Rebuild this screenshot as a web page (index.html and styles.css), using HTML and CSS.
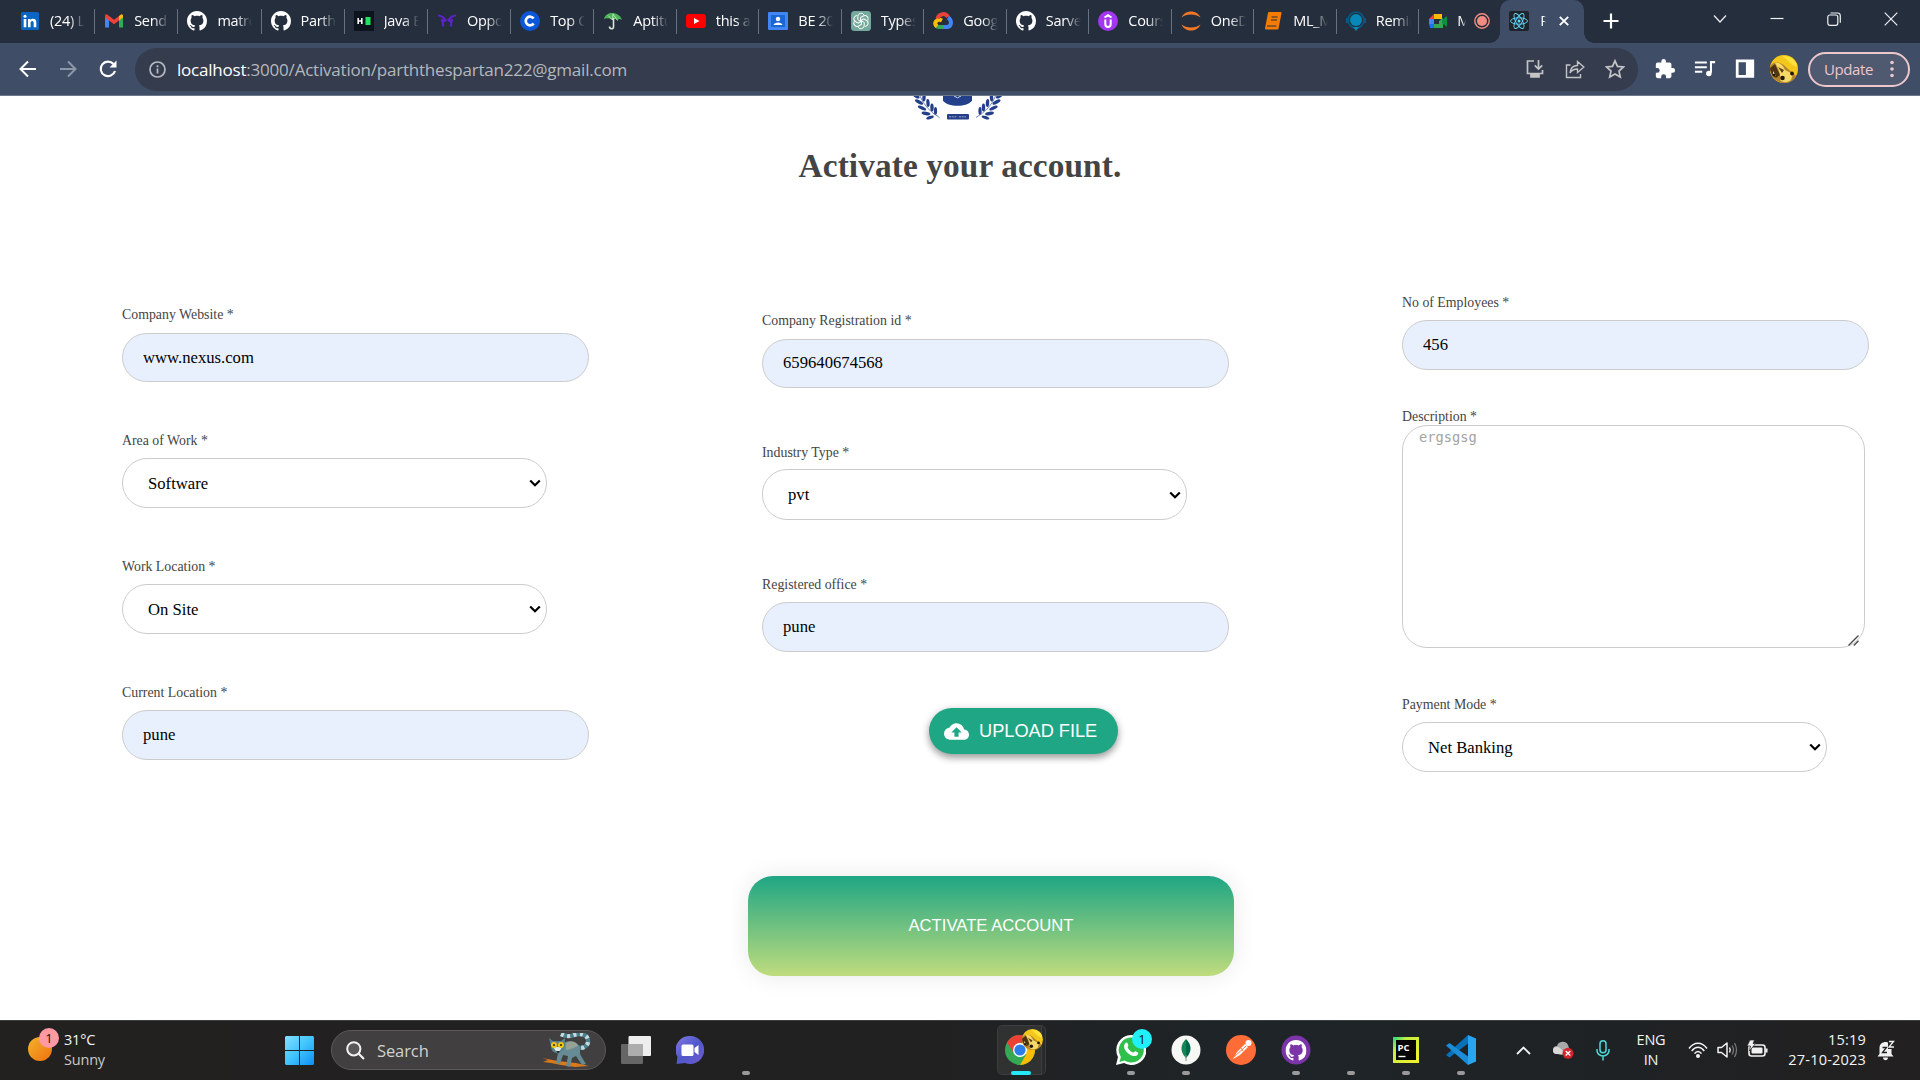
FILE: index.html
```html
<!DOCTYPE html>
<html lang="en">
<head>
<meta charset="utf-8">
<title>Activation</title>
<link rel="stylesheet" href="styles.css">
</head>
<body>
<svg class="defs" aria-hidden="true">
  <symbol id="github" viewBox="0 0 16 16"><path d="M8 0C3.58 0 0 3.58 0 8c0 3.54 2.29 6.53 5.47 7.59.4.07.55-.17.55-.38 0-.19-.01-.82-.01-1.49-2.01.37-2.53-.49-2.69-.94-.09-.23-.48-.94-.82-1.13-.28-.15-.68-.52-.01-.53.63-.01 1.08.58 1.23.82.72 1.21 1.87.87 2.33.66.07-.52.28-.87.51-1.07-1.78-.2-3.64-.89-3.64-3.95 0-.87.31-1.59.82-2.15-.08-.2-.36-1.02.08-2.12 0 0 .67-.21 2.2.82.64-.18 1.32-.27 2-.27s1.36.09 2 .27c1.53-1.04 2.2-.82 2.2-.82.44 1.1.16 1.92.08 2.12.51.56.82 1.27.82 2.15 0 3.07-1.87 3.75-3.65 3.95.29.25.54.73.54 1.48 0 1.07-.01 1.93-.01 2.2 0 .21.15.46.55.38A8.01 8.01 0 0 0 16 8c0-4.42-3.58-8-8-8z" fill="#fff"/></symbol>
  <symbol id="avatar" viewBox="0 0 28 28"><circle cx="14" cy="14" r="14" fill="#f3c81a"/><path d="M1 10C5 6 12 7 17 13l9 8c-2 4-6 7-11 7C7 28 0 22 0 14z" fill="#b5842a"/><path d="M0 13l5-4 5 11-4 3C2 20 0 17 0 13z" fill="#4e3413"/><path d="M5 8c5-1 8 2 10 7l8 4-2 6c-4 3-8 3-11 0 1-5-1-11-5-17z" fill="#f5d968"/><path d="M8 12l6 3-2 3z" fill="#5a3d16"/><path d="M3 16l3 5-3-1z" fill="#fff3c4"/><circle cx="12.500" cy="23" r="2.300" fill="#23150a"/><circle cx="22" cy="18.500" r="1.900" fill="#23150a"/><circle cx="4" cy="20" r="1.500" fill="#23150a"/><path d="M12 1c9-1 15 5 15 11-5-1-10-8-15-11z" fill="#ffe23c"/></symbol>
</svg>

<header class="browser">
  <div class="tabstrip">
    <div class="tab"><svg class="fav" viewBox="0 0 20 20"><rect x="1" y="1" width="18" height="18" rx="1.5" fill="#0a66c2"/><path d="M3.700 8h2.600v8.200H3.700zM8 8h2.500v1.200c.5-.9 1.400-1.400 2.600-1.400 2.500 0 3.200 1.600 3.200 3.900v4.500h-2.600v-4c0-1.200-.2-2.200-1.500-2.200s-1.600 1-1.600 2.200v4H8z" fill="#fff"/><circle cx="5" cy="5.200" r="1.500" fill="#fff"/></svg><span class="name">(24) Li</span></div>
    <div class="tab"><svg class="fav" viewBox="0 0 20 20"><path d="M1 5v11.500h4V8.500z" fill="#4285f4"/><path d="M19 5v11.500h-4V8.500z" fill="#34a853"/><path d="M15 5l2-1.500c1-.6 2 .2 2 1.500v1.500l-4 3z" fill="#fbbc04"/><path d="M1 5c0-1.500 1.200-2 2.200-1.400L10 8.700l5-3.700v4.500l-5 3.800-9-6.800z" fill="#ea4335"/></svg><span class="name">Send e</span></div>
    <div class="tab"><svg class="fav"><use href="#github"/></svg><span class="name">matrou</span></div>
    <div class="tab"><svg class="fav"><use href="#github"/></svg><span class="name">Parth3</span></div>
    <div class="tab"><svg class="fav" viewBox="0 0 20 20"><rect width="20" height="20" fill="#0e141e"/><path d="M4.200 7v6M7.800 7v6M4.200 10h3.600" stroke="#fff" stroke-width="1.600"/><rect x="11.500" y="6" width="5" height="8" fill="#1ee65c"/></svg><span class="name">Java E</span></div>
    <div class="tab"><svg class="fav" viewBox="0 0 20 20"><path d="M1 4.500c4 .3 6 2 7.500 4.500-1.500 2-3 0-4-.5 2 2.500 1 5 2 7M19 4.500c-4 .3-6 2-7.500 4.500 1.500 2 3 0 4-.5-2 2.500-1 5-2 7" fill="none" stroke="#5b23c9" stroke-width="2.200"/></svg><span class="name">Oppor</span></div>
    <div class="tab"><svg class="fav" viewBox="0 0 20 20"><circle cx="10" cy="10" r="10" fill="#0b57d8"/><path d="M13.600 7.600a4.300 4.300 0 1 0 0 4.800" fill="none" stroke="#fff" stroke-width="2.700"/></svg><span class="name">Top Co</span></div>
    <div class="tab late"><svg class="fav" viewBox="0 0 20 20"><path d="M1 8C3 0 16 0 19 9c-2-1.500-3.500-1-4.500.5C13 7.500 11 7.500 9.500 9 7 7 3 6.500 1 8z" fill="#4db457"/><path d="M10.500 7v9c0 2.500-4 2.500-4-.5" fill="none" stroke="#d9e6d9" stroke-width="1.600"/><path d="M5 4.500L9.500 9 10 3l4.500 6.500" stroke="#c8ecc6" fill="none" stroke-width=".8"/></svg><span class="name">Aptitu</span></div>
    <div class="tab late"><svg class="fav" viewBox="0 0 20 20"><rect y="3" width="20" height="14" rx="3" fill="#f00"/><path d="M8 7l5.500 3L8 13z" fill="#fff"/></svg><span class="name">this an</span></div>
    <div class="tab late"><svg class="fav" viewBox="0 0 20 20"><rect y="1" width="20" height="18" rx="1" fill="#4285f4"/><rect x="3" y="4" width="14" height="12" fill="#1967d2"/><circle cx="10" cy="8" r="2.200" fill="#fff"/><path d="M5.500 14c.5-3.500 8.500-3.500 9 0z" fill="#fff"/></svg><span class="name">BE 202</span></div>
    <div class="tab late"><svg class="fav" viewBox="0 0 20 20"><rect width="20" height="20" rx="3.500" fill="#75a99c"/><g fill="none" stroke="#fff" stroke-width="1"><path id="petal" d="M10 10.500L6.800 8.600V5.500a3.300 3.300 0 0 1 6.200-1.500"/><use href="#petal" transform="rotate(60 10 10)"/><use href="#petal" transform="rotate(120 10 10)"/><use href="#petal" transform="rotate(180 10 10)"/><use href="#petal" transform="rotate(240 10 10)"/><use href="#petal" transform="rotate(300 10 10)"/></g></svg><span class="name">Types</span></div>
    <div class="tab late"><svg class="fav" viewBox="0 0 20 20" fill="none" stroke-width="4"><path d="M10 16H6a4 4 0 0 1-3-1.500" stroke="#34a853"/><path d="M4 15.500C0 12 4 7 9 9.500" stroke="#fbbc04"/><path d="M4.500 7.500C6 2.500 12.500 1.500 15 6" stroke="#ea4335"/><path d="M10 16h4.500c4.500-1 4.500-7 .5-9.500" stroke="#4285f4"/></svg><span class="name">Googl</span></div>
    <div class="tab late"><svg class="fav"><use href="#github"/></svg><span class="name">Sarves</span></div>
    <div class="tab late"><svg class="fav" viewBox="0 0 20 20"><circle cx="10" cy="10" r="10" fill="#a435f0"/><path d="M6.500 6.500L10 4.300l3.500 2.200M7.300 8.500V13c0 4 5.400 4 5.400 0V8.500" fill="none" stroke="#fff" stroke-width="2"/></svg><span class="name">Cours</span></div>
    <div class="tab late"><svg class="fav" viewBox="0 0 20 20"><path d="M.5 6.500C4-1.500 16-1.500 19.500 6.500 15 2.500 5 2.500.5 6.500zM.5 13.500c3.500 8 15.500 8 19 0-4.500 4-14.500 4-19 0z" fill="#f37726"/></svg><span class="name">OneD</span></div>
    <div class="tab late"><svg class="fav" viewBox="0 0 20 20"><path d="M6 2h11.500l-3 15.500H3z" fill="#f57c00" stroke="#f57c00" stroke-width="2" stroke-linejoin="round"/><path d="M8.500 6h6M8 9h6M4 15h9.500" stroke="#253040" stroke-width="1.200"/></svg><span class="name">ML_M</span></div>
    <div class="tab late"><svg class="fav" viewBox="0 0 20 20"><circle cx="10" cy="9" r="8" fill="none" stroke="#075985" stroke-width="1.600"/><circle cx="10" cy="9" r="6" fill="#0788b8"/><path d="M7 16h6l-3 4z" fill="#0788b8"/><path d="M0 7h2v5H0zM18 7h2v5h-2z" fill="#075985"/></svg><span class="name">Remin</span></div>
    <div class="tab tab-call"><svg class="fav" viewBox="0 0 20 20"><path d="M1 8l5-5v5z" fill="#ea4335"/><path d="M6 3h8v5H6z" fill="#fbbc04"/><path d="M1 8h5v5H1z" fill="#4285f4"/><path d="M1 13h5v4H2z" fill="#1a73e8"/><path d="M6 13h5v-3l4-3v10H6z" fill="#34a853"/><path d="M14 9l5-4v11l-5-4z" fill="#0b8f43"/></svg><span class="name name-short">Me</span><svg class="rec" viewBox="0 0 16 16"><circle cx="8" cy="8" r="7.200" fill="none" stroke="#f28b82" stroke-width="1.400"/><circle cx="8" cy="8" r="5" fill="#f28b82"/></svg></div>
    <div class="tab active"><svg class="fav" viewBox="0 0 20 20"><rect width="20" height="20" rx="2" fill="#20232a"/><g fill="none" stroke="#61dafb" stroke-width=".9"><ellipse cx="10" cy="10" rx="8.500" ry="3.200"/><ellipse cx="10" cy="10" rx="8.500" ry="3.200" transform="rotate(60 10 10)"/><ellipse cx="10" cy="10" rx="8.500" ry="3.200" transform="rotate(120 10 10)"/></g><circle cx="10" cy="10" r="1.500" fill="#61dafb"/></svg><span class="name name-mini">R</span><svg class="x" viewBox="0 0 10 10"><path d="M.8.8l8.400 8.400M9.200.8L.8 9.200" stroke="#fff" stroke-width="1.900"/></svg></div>
    <svg class="plus" viewBox="0 0 16 16"><path d="M8 .5v15M.5 8h15" stroke="#fff" stroke-width="2.200"/></svg>
    <div class="window-controls">
      <svg viewBox="0 0 14 14"><path d="M1 3.500l6 6.500 6-6.500" /></svg>
      <svg viewBox="0 0 14 14"><path d="M.5 6.500h13" /></svg>
      <svg viewBox="0 0 14 14"><rect x=".8" y="3" width="10" height="10.300" rx="2"/><path d="M3.500 1h7q2.800 0 2.800 2.800v7"/></svg>
      <svg viewBox="0 0 14 14"><path d="M.7.7l12.600 12.600M13.300.7L.7 13.300"/></svg>
    </div>
  </div>
  <div class="toolbar">
    <svg class="nav" viewBox="0 0 20 20"><path d="M18 10H3M10 2.500L2.500 10l7.500 7.500" fill="none" stroke="#fff" stroke-width="2"/></svg>
    <svg class="nav" viewBox="0 0 20 20"><path d="M2 10h15M10 2.500l7.500 7.500-7.500 7.500" fill="none" stroke="#8d97a8" stroke-width="2"/></svg>
    <svg class="nav" viewBox="0 0 20 20"><path d="M17 12a7.300 7.300 0 1 1-1.500-7" fill="none" stroke="#fff" stroke-width="2.200"/><path d="M18.500 1.500v7h-7z" fill="#fff"/></svg>
    <div class="omnibox">
      <svg class="info" viewBox="0 0 17 17"><circle cx="8.500" cy="8.500" r="7.500" fill="none" stroke="#b5bac3" stroke-width="1.700"/><path d="M8.500 7.500v5M8.500 4.300v1.900" stroke="#b5bac3" stroke-width="1.800"/></svg>
      <span class="url"><b>localhost</b>:3000/Activation/parththespartan222@gmail.com</span>
      <svg class="act" viewBox="0 0 20 20"><path d="M9 2H2.500v12.500h15V11M13.500 1v8.500M9.800 6.300l3.700 3.700 3.700-3.700" /><path d="M6 15h8v3H6z" fill="#c4c4c6"/></svg>
      <svg class="act thin" viewBox="0 0 20 20"><path d="M5.500 6H1.500v12.500h14V15M5 14c.5-5 3-7.500 7.500-7.500V2.500L18.800 8l-6.300 5.500v-3.500C9 10 6.800 11 5 14z"/></svg>
      <svg class="act" viewBox="0 0 20 20"><path d="M10 1.800l2.500 5.600 6 .6-4.500 4.100 1.300 6L10 15l-5.300 3.100 1.300-6L1.500 8l6-.6z"/></svg>
    </div>
    <div class="extras">
      <svg viewBox="0 0 24 24"><path d="M20.500 11H19V7a2 2 0 0 0-2-2h-4V3.500a2.500 2.500 0 0 0-5 0V5H4a2 2 0 0 0-2 2v3.800h1.500a2.700 2.700 0 0 1 0 5.400H2V20a2 2 0 0 0 2 2h3.800v-1.500a2.700 2.700 0 0 1 5.400 0V22H17a2 2 0 0 0 2-2v-4h1.500a2.500 2.500 0 0 0 0-5z" fill="#fff"/></svg>
      <svg viewBox="0 0 24 24"><path d="M1 5h13M1 10h13M1 15h8" stroke="#fff" stroke-width="2.200"/><path d="M18.500 16V4.500H23" fill="none" stroke="#fff" stroke-width="2.200"/><circle cx="16.200" cy="17" r="3" fill="#fff"/></svg>
      <svg viewBox="0 0 24 24"><path d="M2 1.500h20v20H2zM5 4.500v14h8v-14z" fill="#fff" fill-rule="evenodd"/></svg>
      <svg class="profile"><use href="#avatar"/></svg>
    </div>
    <div class="update"><span>Update</span><svg viewBox="0 0 4 18"><g fill="#ecc8cc"><circle cx="2" cy="2.500" r="1.800"/><circle cx="2" cy="9" r="1.800"/><circle cx="2" cy="15.500" r="1.800"/></g></svg></div>
  </div>
</header>

<main class="page">
  <svg class="crest" viewBox="0 0 90 25">
    <g fill="#24408a">
      <path d="M30 0h29v4.500c-4 7-25 7-29 0z"/>
      <g id="laurel"><ellipse cx="3" cy="0" rx="4" ry="1.600" transform="rotate(30 3 0)"/><ellipse cx="6" cy="6" rx="4.500" ry="1.700" transform="rotate(30 6 6)"/><ellipse cx="9" cy="12" rx="4.500" ry="1.700" transform="rotate(25 9 12)"/><ellipse cx="13" cy="17.500" rx="4.500" ry="1.700" transform="rotate(10 13 17.500)"/><ellipse cx="17" cy="21.500" rx="4" ry="1.500" transform="rotate(-20 17 21.500)"/><ellipse cx="11" cy="1.500" rx="1.700" ry="4" transform="rotate(5 11 1.500)"/><ellipse cx="15" cy="7" rx="1.700" ry="4" transform="rotate(-5 15 7)"/><ellipse cx="19" cy="11.500" rx="1.700" ry="4"/><ellipse cx="22.500" cy="15" rx="1.600" ry="4"/></g>
      <use href="#laurel" transform="translate(89.500 0) scale(-1 1)"/>
      <rect x="34" y="18" width="22" height="5.500" rx="1"/>
    </g>
    <path d="M7 0Q12 13 26.500 21.500M82.500 0Q77.500 13 63 21.500" fill="none" stroke="#4c639f" stroke-width=".8"/>
    <path d="M41 0l3.500 1.800L48 0" fill="none" stroke="#cfd6e8"/>
    <path d="M36 20.800h8M46 20.800h7" stroke="#7283b3" stroke-width="1.500" stroke-dasharray="2 .7"/>
  </svg>
  <h1>Activate your account.</h1>
  <form>
    <div class="columns">
      <div class="col col-a">
        <div class="field"><label>Company Website *</label><input class="low" value="www.nexus.com"></div>
        <div class="field"><label>Area of Work *</label><select><option>Software</option></select></div>
        <div class="field"><label>Work Location *</label><select><option>On Site</option></select></div>
        <div class="field"><label>Current Location *</label><input value="pune"></div>
      </div>
      <div class="col col-b">
        <div class="field"><label>Company Registration id *</label><input class="low digits" value="659640674568"></div>
        <div class="field industry"><label>Industry Type *</label><select><option>pvt</option></select></div>
        <div class="field"><label>Registered office *</label><input value="pune"></div>
        <button type="button" class="upload"><svg viewBox="0 0 24 16"><path d="M19.350 6.040A7.490 7.490 0 0 0 12 0C9.110 0 6.600 1.640 5.350 4.040A5.994 5.994 0 0 0 0 10c0 3.310 2.690 6 6 6h13c2.760 0 5-2.240 5-5 0-2.640-2.050-4.780-4.650-4.960zM14 9v4h-4V9H7l5-5 5 5h-3z" fill="#fff"/></svg>UPLOAD FILE</button>
      </div>
      <div class="col col-c">
        <div class="field"><label>No of Employees *</label><input value="456"></div>
        <div class="field desc"><label>Description *</label><textarea placeholder="ergsgsg"></textarea><svg class="grip" viewBox="0 0 11 11"><path d="M.5 10.500l10-10M5.800 10.500l4.700-4.700" stroke="#4a4a4a" stroke-width="1.400"/></svg></div>
        <div class="field"><label>Payment Mode *</label><select><option>Net Banking</option></select></div>
      </div>
    </div>
    <button type="button" class="submit">ACTIVATE ACCOUNT</button>
  </form>
</main>

<footer class="taskbar">
  <div class="weather">
    <div class="sun"><span class="badge pink">1</span></div>
    <div class="two"><span>31°C</span><span class="dim">Sunny</span></div>
  </div>
  <svg class="start" viewBox="0 0 29 29"><defs><linearGradient id="w" x2="1" y2="1"><stop stop-color="#84e0ff"/><stop offset=".5" stop-color="#40c3fb"/><stop offset="1" stop-color="#0d8ff5"/></linearGradient></defs><path d="M1 0h13v14H0V1zM15 0h13l1 1v13H15zM0 15h14v14H1l-1-1zM15 15h14v13l-1 1H15z" fill="url(#w)"/></svg>
  <div class="search">
    <svg class="glass" viewBox="0 0 19 19"><circle cx="7.800" cy="7.800" r="6.600" fill="#5a5858" stroke="#f2f2f2" stroke-width="2"/><path d="M12.500 12.500l5.500 5.500" stroke="#f2f2f2" stroke-width="2.200"/></svg>
    <span>Search</span>
    <svg class="lemur" viewBox="0 0 50 34"><path d="M34 13c8 5 14-1 13-6-1-6-8-7-14-5-5 2-9 1-13-1" fill="none" stroke="#4a7f8d" stroke-width="4.200"/><path d="M34 13c8 5 14-1 13-6-1-6-8-7-14-5-5 2-9 1-13-1" fill="none" stroke="#c6d9dd" stroke-width="4.200" stroke-dasharray="3 3.500"/><path d="M1 25l16 3 18 2 13 3-14 1-14-2-10-2-8-1 5-2z" fill="#d9791b"/><path d="M17 15c4-7 16-10 21-2 2 4 0 7 2 10l5 8-4 1-6-9-4 2-2 9-4-1 2-10-5-1-3 9-4-1 2-10z" fill="#668b94"/><path d="M25 10c6-3 11-1 12 3-3 1-8 4-12 4z" fill="#96a294"/><path d="M8 5l4 3h8l4-3v7c0 4-4 8-8 8s-6-3-6-7z" fill="#55808d"/><path d="M12 14h9l-4 7z" fill="#e3e8df"/><circle cx="13" cy="12" r="3" fill="#f1c40f"/><circle cx="20" cy="12" r="3" fill="#f1c40f"/><circle cx="13" cy="12" r="1" fill="#222"/><circle cx="20" cy="12" r="1" fill="#222"/><path d="M15 18h4l-2 3z" fill="#1e3036"/></svg>
  </div>
  <svg class="taskview" viewBox="0 0 30 28"><rect y="8" width="22" height="20" rx="1" fill="#666"/><rect x="7.500" width="22.500" height="20" rx="1" fill="#eee"/><path d="M7.500 8H22v12H7.500z" fill="#adadad"/></svg>
  <svg class="chat" viewBox="0 0 28 28"><defs><linearGradient id="t" x2="1" y2="1"><stop stop-color="#8479e8"/><stop offset=".5" stop-color="#5058c9"/><stop offset="1" stop-color="#6f5bd1"/></linearGradient></defs><path d="M14 0a14 14 0 1 1-5 27l-8.500 1 1-7A14 14 0 0 1 14 0z" fill="url(#t)"/><rect x="5.500" y="8.500" width="12" height="11.500" rx="1.500" fill="#fff"/><path d="M18.500 12l4-3v10l-4-3z" fill="#fff"/></svg>
  <div class="app blank"><i></i></div>
  <div class="app chrome">
    <svg viewBox="0 0 30 30"><circle cx="15" cy="15" r="15" fill="#34a853"/><path d="M15 15V8h13.300A15 15 0 0 1 15 30l6.500-11z" fill="#fbbc04"/><path d="M2 7.500A15 15 0 0 1 28 7.500H15L9 18.500z" fill="#ea4335"/><circle cx="15" cy="15" r="7" fill="#fff"/><circle cx="15" cy="15" r="5.600" fill="#2b7de9"/></svg>
    <svg class="mini-avatar"><use href="#avatar"/></svg><i></i>
  </div>
  <div class="apps">
    <div class="app"><svg viewBox="0 0 30 30"><path d="M15 0a15 15 0 1 1-7 28L0 30l2-8A15 15 0 0 1 15 0z" fill="#fff"/><path d="M15 2.500a12.500 12.500 0 1 1-6.500 23L3.500 27l1.400-5A12.500 12.500 0 0 1 15 2.500z" fill="#2fc04c"/><path d="M9 8.500c1.500-1.800 2.500-1 3.300 1.500.4 1-1 1.800-.6 2.500 1.200 2.400 2.900 4 5.300 5 .8.200 1.500-1.500 2.300-1.200 3 1.300 3.500 1.700 2.500 3.200-1.400 2-4 2-6.800.7-3.500-1.700-5.500-4-6.700-7-.5-1.600-.2-3.500.7-4.700z" fill="#fff"/></svg><span class="badge cyan">1</span><i></i></div>
    <div class="app"><svg viewBox="0 0 30 30"><circle cx="15" cy="15" r="14.500" fill="#f7f7f5"/><path d="M15 4c5 5 7 12 0 19z" fill="#00684a"/><path d="M15 4c-5 5-7 12 0 19z" fill="#168457"/><path d="M15 20v6" stroke="#7b9488"/></svg><i></i></div>
    <div class="app"><svg viewBox="0 0 30 30"><circle cx="15" cy="15" r="15" fill="#ff6c37"/><path d="M7 24l4-7 8-8 3 3-8 8z" fill="#fff"/><circle cx="22.500" cy="8" r="3" fill="#fff"/><path d="M8 22l12-11M15 13l2 3" stroke="#ff6c37" stroke-width=".9"/></svg></div>
    <div class="app"><svg viewBox="0 0 30 30"><circle cx="15" cy="15" r="14.500" fill="#7c35a8"/><use href="#github" x="4.500" y="5" width="21" height="21"/></svg><i></i></div>
    <div class="app"><i></i></div>
    <div class="app"><svg viewBox="0 0 30 30"><defs><linearGradient id="p" x2="1" y2="1"><stop stop-color="#21d789"/><stop offset=".3" stop-color="#c8f03c"/><stop offset="1" stop-color="#f5ef2b"/></linearGradient></defs><rect x="2" y="2" width="26" height="26" fill="url(#p)"/><rect x="5" y="5" width="20" height="20" fill="#050505"/><text x="6.500" y="15.500" class="pc" fill="#fff">PC</text><path d="M7.500 21.500h7" stroke="#fff" stroke-width="1.400"/></svg><i></i></div>
    <div class="app"><svg viewBox="0 0 30 30"><path d="M22 0v8.500L3.500 22.500 0 20z" fill="#0871b8"/><path d="M0 10.500L3.500 8 22 21.500V30z" fill="#1c8cd8"/><path d="M22 0l8 3.500v23L22 30z" fill="#29a4f0"/></svg><i></i></div>
  </div>
  <div class="tray">
    <svg class="up" viewBox="0 0 15 9"><path d="M1 8l6.500-6.500L14 8" fill="none" stroke="#f2f2f2" stroke-width="1.800"/></svg>
    <svg class="cloud" viewBox="0 0 21 18"><path d="M4 13a4 4 0 0 1 0-8 6 6 0 0 1 11-1l2 6-8 4z" fill="#a9a9a9"/><path d="M3 13a3.500 3.500 0 0 1 1-7c3 0 5 2 7 7z" fill="#d9d9d9"/><circle cx="15" cy="12.300" r="5.500" fill="#d5232e"/><path d="M12.700 10l4.600 4.600M17.300 10l-4.600 4.600" stroke="#fff" stroke-width="1.400"/></svg>
    <svg class="mic" viewBox="0 0 14 21"><g fill="none" stroke="#4fd8d8" stroke-width="1.500"><rect x="4" y=".8" width="6" height="12" rx="3"/><path d="M1 9v1.500a6 5.500 0 0 0 12 0V9M7 16v4.500"/></g></svg>
    <div class="two lang"><span>ENG</span><span>IN</span></div>
    <svg class="wifi" viewBox="0 0 20 16"><g fill="none" stroke="#f2f2f2" stroke-width="1.500"><path d="M1 6.500C6-.5 14-.5 19 6.500M3.700 9C7.500 4 12.500 4 16.300 9M6.500 11.700c2-3 5-3 7 0"/></g><circle cx="10" cy="14" r="2" fill="#f2f2f2"/></svg>
    <svg class="vol" viewBox="0 0 21 16"><path d="M1 5.500h3.500L10 1v14l-5.500-4.500H1z" fill="none" stroke="#f2f2f2" stroke-width="1.500" stroke-linejoin="round"/><path d="M12.500 5.500q1.500 2.500 0 5" fill="none" stroke="#f2f2f2" stroke-width="1.400"/><path d="M15 3.500q3 4.500 0 9M17.500 1q4 7 0 14" fill="none" stroke="#777" stroke-width="1.300"/></svg>
    <svg class="bat" viewBox="0 0 21 17"><rect x="2" y="5" width="16" height="11" rx="2.500" fill="none" stroke="#f2f2f2" stroke-width="1.600"/><rect x="4.500" y="7.500" width="11" height="6" rx="1" fill="#f2f2f2"/><path d="M19.500 8.500v4" stroke="#f2f2f2" stroke-width="2"/><path d="M3 0l4.500 0-1.500 3.500h2.500L2.500 11l1-5H0z" fill="#f2f2f2" stroke="#222" stroke-width=".7"/></svg>
    <div class="two clock"><span>15:19</span><span>27-10-2023</span></div>
    <svg class="bell" viewBox="0 0 18 21"><path d="M2.500 14V8c0-8 12-8 12 0v6l2 2.500H.5zM6 17.500h5c0 3.500-5 3.500-5 0z" fill="#f2f2f2"/><path d="M11 0h7v9h-7z" fill="#222"/><path d="M12 1.500h4.500L12 7h5" fill="none" stroke="#f2f2f2" stroke-width="1.300"/><path d="M5.500 7.500h4l-4 5h4.500" fill="none" stroke="#222" stroke-width="1.300"/></svg>
  </div>
</footer>
</body>
</html>
```
FILE: styles.css
```css
* { box-sizing: border-box; }
body { margin: 0; width: 1920px; height: 1080px; overflow: hidden; display: flex; flex-direction: column; background: #fff; font-family: "Open Sans", "Noto Sans", sans-serif; }
svg { display: block; flex: none; }
.defs { position: absolute; width: 0; height: 0; }

/* browser chrome */
.browser { height: 96px; flex: none; background: #3f4d66; border-bottom: 1px solid #6d788b; }
.tabstrip { height: 43px; background: #252e3d; display: flex; padding-left: 12px; }
.tab { width: 83.200px; height: 43px; flex: none; display: flex; align-items: center; padding: 0 0 1px 9px; position: relative; }
.tab.late { width: 82.500px; }
.tab.tab-call { width: 81px; }
.tab::after { content: ""; position: absolute; right: 0; top: 9px; width: 1px; height: 25px; background: #687181; }
.tab:first-child .fav { margin-left: -1px; }
.tab.tab-call::after { display: none; }
.fav { width: 20px; height: 20px; }
.name { margin-left: 10px; width: 35px; overflow: hidden; white-space: nowrap; font-size: 14.500px; letter-spacing: -.3px; line-height: 22px; color: #fff; -webkit-mask-image: linear-gradient(90deg, #000 55%, transparent); mask-image: linear-gradient(90deg, #000 55%, transparent); }
.name-short { width: 9px; margin-left: 9px; }
.name-mini { width: 6px; margin-left: 11px; }
.rec { width: 16px; height: 16px; margin-left: 8px; }
.tab.active { width: 84px; background: #3f4d66; border-radius: 10px 10px 0 0; }
.tab.active::before, .tab.active::after { content: ""; position: absolute; top: auto; bottom: 0; width: 10px; height: 10px; }
.tab.active::before { left: -10px; background: radial-gradient(circle at 0 0, transparent 9.500px, #3f4d66 10px); }
.tab.active::after { right: -10px; background: radial-gradient(circle at 100% 0, transparent 9.500px, #3f4d66 10px); }
.x { width: 10px; height: 10px; margin-left: 13px; }
.plus { width: 16px; height: 16px; margin: 13px 0 0 19px; }
.window-controls { margin: 12px 22px 0 auto; display: flex; gap: 43px; }
.window-controls svg { width: 14px; height: 14px; fill: none; stroke: #eef0f3; stroke-width: 1.200; }
.toolbar { height: 52px; display: flex; align-items: center; padding: 0 10px 0 18px; }
.nav { width: 20px; height: 20px; margin-right: 20px; }
.nav:nth-child(3) { margin-right: 17px; }
.omnibox { width: 1503px; height: 43px; border-radius: 22px; background: #343c4d; display: flex; align-items: center; padding: 0 13px 0 14px; }
.info { width: 17px; height: 17px; }
.url { margin: 0 auto 0 11px; padding-top: 1px; font-size: 17px; line-height: 24px; letter-spacing: -.21px; color: #b4b8bf; }
.url b { font-weight: 400; color: #fff; }
.act { width: 20px; height: 20px; margin-left: 20px; fill: none; stroke: #c4c4c6; stroke-width: 1.700; }
.act.thin { stroke-width: 1.400; }
.extras { display: flex; align-items: center; gap: 18px; margin-left: 16px; }
.extras svg { width: 22px; height: 22px; }
.extras .profile { width: 28px; height: 28px; margin-left: -4px; }
.update { margin-left: auto; width: 102px; height: 35px; border: 2px solid #ecc8cc; border-radius: 18px; background: #4f5970; display: flex; align-items: center; padding: 0 14px 1px 14px; justify-content: space-between; color: #ecc8cc; font-size: 15px; letter-spacing: -.4px; }
.update svg { width: 4px; height: 18px; }

/* activation form */
.page { height: 924px; flex: none; background: #fff; font-family: "Liberation Serif", serif; }
.crest { width: 90px; height: 25px; margin-left: 913px; }
h1 { margin: 26px 0 0; height: 143px; line-height: 38px; text-align: center; font-size: 33.330px; letter-spacing: .1px; font-weight: 700; color: #444; }
.columns { display: grid; grid-template-columns: 640px 640px 1fr; height: 586px; padding-left: 122px; }
.col { display: flex; flex-direction: column; align-items: flex-start; }
.col-a { padding-top: 16px; gap: 50px; }
.col-b { padding-top: 22px; gap: 56px; }
.col-c { padding-top: 4px; gap: 38px; }
.field { display: flex; flex-direction: column; position: relative; }
label { font-size: 13.850px; line-height: 18px; margin-bottom: 8px; color: #444; }
input, select { font-family: inherit; font-size: 16.670px; color: #000; border: 1px solid #ccc; border-radius: 25px; height: 50px; outline: 0; margin: 0; }
input { width: 467px; background: #e8f0fe; padding: 0 20px; }
input.low { height: 49px; margin-top: 1px; }
input.digits { padding-bottom: 2px; }
select { width: 425px; padding: 0 25px; -webkit-appearance: none; appearance: none; background: #fff url("data:image/svg+xml,%3Csvg xmlns='http://www.w3.org/2000/svg' viewBox='0 0 12 8'%3E%3Cpath d='M1.200 1.500L6 6.200l4.800-4.700' fill='none' stroke='%23000' stroke-width='2.200'/%3E%3C/svg%3E") no-repeat right 5px center / 12px 8px; }
.industry label { margin-bottom: 7px; }
.industry select { height: 51px; }
.upload { width: 189px; height: 46px; margin: 0 0 0 167px; border: 0; border-radius: 23px; background: #1fa684; color: #fff; font: 18.200px "Liberation Sans", sans-serif; padding: 0 15px; display: flex; align-items: center; gap: 10px; white-space: nowrap; box-shadow: 0 4px 7px rgba(0,0,0,.32), 0 1px 10px rgba(0,0,0,.12); }
.upload svg { width: 25px; height: 17px; }
.desc label { margin-bottom: 0; line-height: 17px; }
textarea { width: 463px; height: 223px; margin: 0 0 10px; border: 1px solid #ccc; border-radius: 25px; padding: 3px 16px; font: 13.700px "DejaVu Sans Mono", monospace; resize: none; outline: 0; }
textarea::placeholder { color: #a3a3a3; }
.grip { position: absolute; width: 11px; height: 11px; right: 6px; bottom: 12px; }
.submit { display: block; margin-left: 748px; width: 486px; height: 100px; border: 0; border-radius: 25px; background: linear-gradient(#1fa684, #bfdc7d); color: #fff; font: 16.670px "Liberation Sans", sans-serif; box-shadow: 0 0 25px rgba(0,0,0,.09); }

/* taskbar */
.taskbar { height: 60px; flex: none; display: flex; align-items: center; background: linear-gradient(90deg, #222120 0%, #212121 48%, #1e2428 65%, #1f2224 85%, #222020 100%); border-top: 1px solid #3b3e3f; color: #f4f4f4; padding: 0 0 1px 28px; }
.weather { display: flex; width: 257px; align-items: center; }
.sun { position: relative; width: 24px; height: 24px; border-radius: 50%; background: linear-gradient(135deg, #f2b42d, #f0700f); margin-right: 12px; margin-top: -2px; }
.badge { position: absolute; width: 20px; height: 20px; border-radius: 50%; font-size: 13px; line-height: 20px; text-align: center; color: #111; }
.pink { background: #ff99a1; left: 11px; top: -9px; }
.cyan { background: #1ff0fa; }
.two { display: flex; flex-direction: column; font-size: 14.500px; line-height: 20px; letter-spacing: -.2px; margin-top: -1px; }
.dim { color: #c9c9c9; }
.start { width: 29px; height: 29px; margin-right: 17px; }
.search { width: 275px; height: 40px; border: 1px solid #5b5959; border-radius: 20px; background: #413f3f; display: flex; align-items: center; padding: 0 14px 0 14px; }
.glass { width: 19px; height: 19px; margin-right: 12px; }
.search span { font-size: 16.500px; letter-spacing: -.1px; color: #d2d2d2; margin-right: auto; }
.lemur { width: 50px; height: 34px; }
.taskview { width: 30px; height: 28px; margin: 0 25px 0 15px; }
.chat { width: 28px; height: 28px; }
.app { position: relative; width: 50px; height: 50px; display: flex; justify-content: center; padding-top: 10px; flex: none; }
.app > svg { width: 30px; height: 30px; }
.app i { position: absolute; left: 21px; bottom: 0; width: 8px; height: 4px; border-radius: 2px; background: #9a9a9a; }
.blank { margin-left: 17px; }
.chrome { width: 49px; margin-left: 226px; border: 1px solid #3c3d3e; border-radius: 5px; background: linear-gradient(90deg, #303131 43px, #3d3e3f 43px, #3d3e3f 44px, #292a2b 44px); padding: 9px 3px 0 0; }
.chrome .mini-avatar { position: absolute; width: 21px; height: 21px; left: 24px; top: 3px; }
.chrome i { width: 20px; left: 13px; bottom: -1px; background: #25e9fb; }
.apps { display: flex; gap: 5px; margin-left: 60px; }
.apps .badge { left: 26px; top: 4px; }
.pc { font: 700 9.500px "Open Sans", sans-serif; }
.tray { display: flex; align-items: center; margin-left: 30px; }
.up { width: 15px; height: 9px; margin-right: 22px; }
.cloud { width: 21px; height: 18px; margin-right: 22px; }
.mic { width: 14px; height: 21px; margin-right: 27px; }
.lang { width: 28px; align-items: center; margin-right: 23px; }
.wifi { width: 20px; height: 16px; margin-right: 9px; }
.vol { width: 21px; height: 16px; margin-right: 9px; }
.bat { width: 21px; height: 17px; margin: -3px 19px 0 0; }
.clock { width: 79px; align-items: flex-end; margin-right: 11px; letter-spacing: .2px; }
.bell { width: 18px; height: 21px; }
```
